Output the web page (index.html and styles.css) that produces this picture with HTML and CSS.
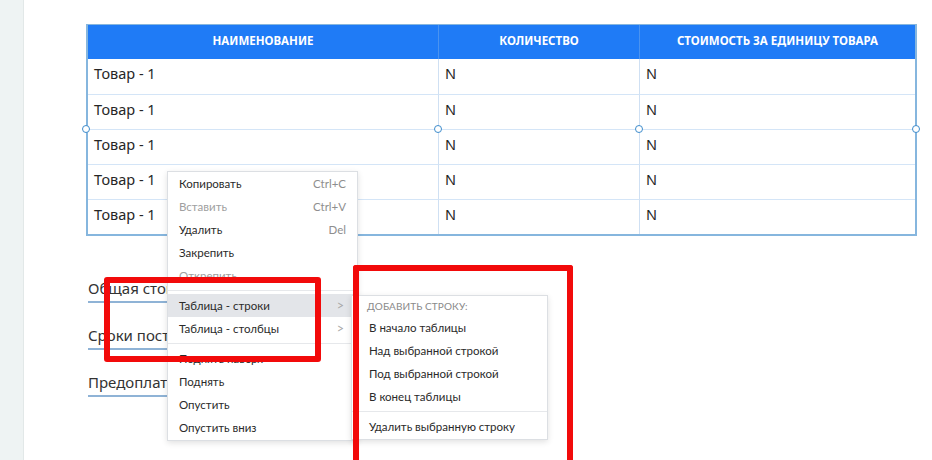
FILE: index.html
```html
<!DOCTYPE html>
<html lang="ru">
<head>
<meta charset="utf-8">
<title>Таблица</title>
<link rel="stylesheet" href="styles.css">
</head>
<body>
<div class="layout">
  <aside class="side"></aside>
  <main class="content">
    <div class="table-wrap">
      <div class="table">
        <div class="th">Наименование</div>
        <div class="th">Количество</div>
        <div class="th">Стоимость за единицу товара</div>

        <div class="td">Товар - 1</div><div class="td">N</div><div class="td">N</div>
        <div class="td">Товар - 1</div><div class="td">N</div><div class="td">N</div>
        <div class="td">Товар - 1</div><div class="td">N</div><div class="td">N</div>
        <div class="td">Товар - 1</div><div class="td">N</div><div class="td">N</div>
        <div class="td">Товар - 1</div><div class="td">N</div><div class="td">N</div>
      </div>
      <span class="handle h1"></span>
      <span class="handle h2"></span>
      <span class="handle h3"></span>
      <span class="handle h4"></span>
    </div>

    <div class="fields">
      <div class="field">Общая стоимость</div>
      <div class="field">Сроки поставки</div>
      <div class="field">Предоплата</div>
    </div>
  </main>
</div>

<div class="menu main-menu">
  <div class="mi"><span>Копировать</span><span class="key">Ctrl+C</span></div>
  <div class="mi off"><span>Вставить</span><span class="key">Ctrl+V</span></div>
  <div class="mi"><span>Удалить</span><span class="key">Del</span></div>
  <div class="mi"><span>Закрепить</span></div>
  <div class="mi off"><span>Открепить</span></div>
  <div class="sep"></div>
  <div class="mi active"><span>Таблица - строки</span><span class="arrow">&gt;</span></div>
  <div class="mi"><span>Таблица - столбцы</span><span class="arrow">&gt;</span></div>
  <div class="sep"></div>
  <div class="mi"><span>Поднять наверх</span></div>
  <div class="mi"><span>Поднять</span></div>
  <div class="mi"><span>Опустить</span></div>
  <div class="mi"><span>Опустить вниз</span></div>
</div>

<div class="menu sub-menu">
  <div class="sub-title">Добавить строку:</div>
  <div class="mi"><span>В начало таблицы</span></div>
  <div class="mi"><span>Над выбранной строкой</span></div>
  <div class="mi"><span>Под выбранной строкой</span></div>
  <div class="mi"><span>В конец таблицы</span></div>
  <div class="sep"></div>
  <div class="mi"><span>Удалить выбранную строку</span></div>
</div>

<div class="mark mark1"></div>
<div class="mark mark2"></div>
</body>
</html>
```

FILE: styles.css
```css
html, body {
  margin: 0;
  padding: 0;
  background: #ffffff;
  width: 932px;
  height: 460px;
  overflow: hidden;
}

.layout {
  display: flex;
  height: 460px;
}

.side {
  width: 23px;
  flex: none;
  background: #eef3f3;
  border-right: 1px solid #e2e8e8;
}

.content {
  flex: 1;
  padding: 24px 0 0 62px;
  font-family: "Noto Sans", "Open Sans", sans-serif;
  color: #2b2b2b;
}

.table-wrap {
  position: relative;
  width: 831px;
}

.table {
  display: grid;
  grid-template-columns: 350px 201px 276px;
  border: 2px solid #86b6de;
  border-top-width: 1px;
}

.th {
  height: 34px;
  background: #1f7bf6;
  color: #ffffff;
  font-weight: 700;
  font-size: 11.5px;
  text-transform: uppercase;
  display: flex;
  align-items: center;
  justify-content: center;
  padding-bottom: 4px;
  box-sizing: border-box;
  border-left: 1px solid #4a93f0;
}

.th:first-child {
  border-left: none;
}

.td {
  height: 35px;
  box-sizing: border-box;
  border-top: 1px solid #d4e5f7;
  border-left: 1px solid #cfe0f3;
  padding: 4px 0 0 6px;
  font-size: 14.5px;
  line-height: 20px;
  color: #262626;
}

.td:nth-child(3n+1) {
  border-left: none;
}

.th + .td,
.th ~ .td:nth-child(4),
.th ~ .td:nth-child(5),
.th ~ .td:nth-child(6) {
  border-top: none;
}

.handle {
  position: absolute;
  top: 101px;
  width: 6px;
  height: 6px;
  border: 1px solid #3e8ccc;
  border-radius: 50%;
  background: #ffffff;
}

.h1 { left: -4px; }
.h2 { left: 348px; }
.h3 { left: 549px; }
.h4 { left: 826px; }

.fields {
  display: flex;
  flex-direction: column;
  gap: 22px;
  margin: 42px 0 0 2px;
  width: 250px;
}

.field {
  font-size: 15px;
  line-height: 20px;
  padding-bottom: 3px;
  border-bottom: 2px solid #8fb3d6;
  color: #333333;
}

.menu {
  position: absolute;
  background: #ffffff;
  border: 1px solid #dcdfe3;
  box-shadow: 0 2px 6px rgba(0, 0, 0, 0.12);
  font-family: Lato, "Open Sans", sans-serif;
  font-size: 11.5px;
  color: #2a2a2a;
}

.main-menu {
  left: 167px;
  top: 171px;
  width: 189px;
  padding: 0 0 1px;
}

.mi {
  height: 23px;
  display: flex;
  align-items: center;
  justify-content: space-between;
  padding: 0 11px 0 11px;
}

.mi.off {
  color: #a0a0a0;
}

.mi.active {
  background: #e3e5e9;
}

.key {
  color: #8e8e8e;
}

.arrow {
  color: #a8a8a8;
  font-size: 12.5px;
  padding-right: 2px;
}

.sep {
  height: 1px;
  background: #e6e8eb;
  margin: 3px 0;
}

.sub-menu {
  left: 351px;
  top: 295px;
  width: 195px;
  padding: 0 0 1px;
}

.sub-title {
  height: 20px;
  display: flex;
  align-items: center;
  padding: 0 15px;
  font-size: 10px;
  color: #8a8a8a;
  text-transform: uppercase;
  letter-spacing: 0.1px;
}

.sub-menu .mi {
  padding: 0 17px;
}

.mark {
  position: absolute;
  border: 6px solid #f20a0a;
  border-radius: 3px;
  box-sizing: border-box;
}

.mark1 {
  left: 104px;
  top: 277px;
  width: 217px;
  height: 85px;
}

.mark2 {
  left: 353px;
  top: 265px;
  width: 220px;
  height: 195px;
  border-bottom-width: 0;
  border-radius: 3px 3px 0 0;
}
```
